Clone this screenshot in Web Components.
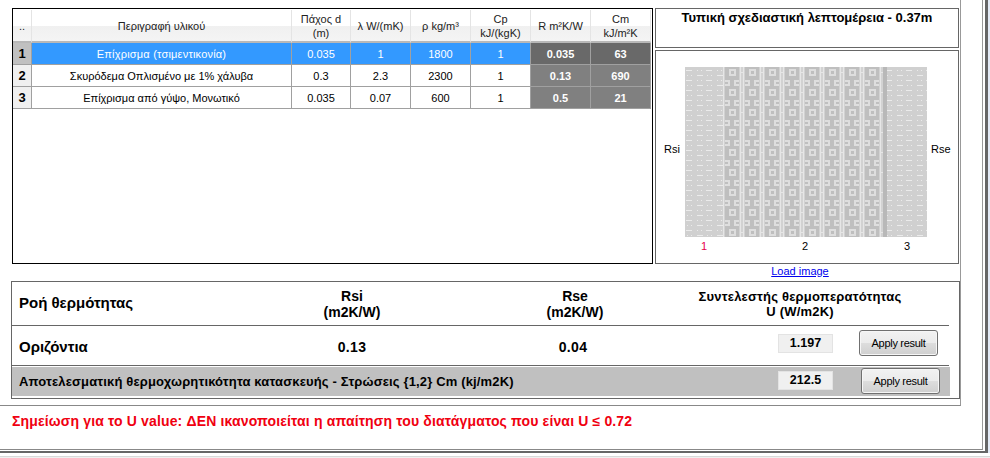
<!DOCTYPE html>
<html lang="el">
<head>
<meta charset="utf-8">
<title>U value</title>
<style>
html, body { margin: 0; padding: 0; background: #fff; }
body { font-family: "Liberation Sans", Arial, sans-serif; overflow: hidden; }
</style>
</head>
<body>
<thermal-page>
  <material-grid slot="grid"></material-grid>
  <detail-box slot="title" class="title">Τυπική σχεδιαστική λεπτομέρεια - 0.37m</detail-box>
  <section-drawing slot="drawing"></section-drawing>
  <result-panel slot="results"></result-panel>
  <span slot="note">Σημείωση για το U value: ΔΕΝ ικανοποιείται η απαίτηση του διατάγματος που είναι U ≤ 0.72</span>
</thermal-page>

<script>
// outer window frame, panel and note line
class ThermalPage extends HTMLElement {
    constructor() {
        super();
        this.attachShadow({ mode: 'open' });
        this.shadowRoot.innerHTML = `
            <style>
                :host { display: block; width: 990px; height: 458px; background: #e3eaf6; overflow: hidden; }
                .frame { width: 985px; height: 451px; background: #fff; padding-right: 0; border-right: 3px solid #666; border-bottom: 2px solid #666; box-sizing: content-box; }
                .win { height: 449px; width: 982px; background: #fff; border-right: 1px solid #999; border-bottom: 1px solid #888; }
                .panel { width: 960px; height: 405px; border-right: 1px solid #999; border-bottom: 1px solid #888; }
                .top { display: flex; height: 281px; padding: 8px 0 0 12px; gap: 2px; box-sizing: border-box; }
                .side { width: 305px; display: flex; flex-direction: column; gap: 2px; }
                .results { padding: 0 0 0 11px; }
                .note { padding: 7px 0 0 12px; color: #f00010; font-weight: bold; font-size: 14px; letter-spacing: .15px; line-height: 16px; }
                .foot { height: 3px; background: #fff; border-bottom: 1px solid #d8d8d8; }
                .foot2 { height: 2px; background: #f0f0f0; }
            </style>
            <div class="frame">
                <div class="win">
                    <div class="panel">
                        <div class="top">
                            <slot name="grid"></slot>
                            <div class="side">
                                <slot name="title"></slot>
                                <slot name="drawing"></slot>
                            </div>
                        </div>
                        <div class="results"><slot name="results"></slot></div>
                    </div>
                    <div class="note"><slot name="note"></slot></div>
                </div>
            </div>
            <div class="foot"></div>
            <div class="foot2"></div>
        `;
    }
}

// the material table, rows are fixed data
const COLUMNS = [
    ['..'], ['Περιγραφή υλικού'], ['Πάχος d', '(m)'], ['λ W/(mK)'], ['ρ kg/m³'],
    ['Cp', 'kJ/(kgK)'], ['R m²K/W'], ['Cm', 'kJ/m²K']
];
const ROWS = [
    ['1', 'Επίχρισμα (τσιμεντικονία)', '0.035', '1', '1800', '1', '0.035', '63'],
    ['2', 'Σκυρόδεμα Οπλισμένο με 1% χάλυβα', '0.3', '2.3', '2300', '1', '0.13', '690'],
    ['3', 'Επίχρισμα από γύψο, Μονωτικό', '0.035', '0.07', '600', '1', '0.5', '21']
];

class MaterialGrid extends HTMLElement {
    constructor() {
        super();
        this.attachShadow({ mode: 'open' });
        const head = COLUMNS.map((lines) => `<div class="hd">${lines.map((l) => `<span>${l}</span>`).join('')}</div>`).join('');
        const body = ROWS.map((row, r) => row.map((text, c) => {
            let cls = 'cell';
            if (c === 0) cls += ' rh';
            if (c === 1 && r === 0) cls += ' wide';
            if (c >= 6) cls += ' calc';
            if (r === 0) cls += ' sel';
            return `<div class="${cls}">${text}</div>`;
        }).join('')).join('');
        this.shadowRoot.innerHTML = `
            <style>
                :host { display: block; flex: none; width: 641px; height: 256px; box-sizing: border-box; border: 1px solid #000; font-size: 11px; color: #000; background: #fff; }
                .g { display: grid; grid-template-columns: 19px 260px 59px 60px 60px 60px 60px 60px; grid-template-rows: 33px repeat(3, 22px); margin-top: 1px; }
                .hd { display: flex; flex-direction: column; align-items: center; justify-content: center; line-height: 14px; box-sizing: border-box;
                    background: linear-gradient(#ffffff 0, #ffffff 50%, #f0f0f0 51%, #f4f4f4 100%);
                    border-right: 1px solid #e4e4e4; border-bottom: 2px solid #b8b8b8; color: #222; }
                .cell { display: flex; align-items: center; justify-content: center; box-sizing: border-box; border-right: 1px solid #a0a0a0; border-bottom: 1px solid #a0a0a0; }
                .wide { letter-spacing: .2px; }
                .rh { background: #f0f0f0; font-weight: bold; font-size: 13px; }
                .sel { background: #3399ff; color: #fff; }
                .rh.sel { background: #c0c0c0; color: #000; }
                .calc { background: #808080; color: #fff; font-weight: bold; }
                .calc.sel { background: #696969; }
            </style>
            <div class="g">${head}${body}</div>
        `;
    }
}

// simple outlined box, slot content is the title
class DetailBox extends HTMLElement {
    constructor() {
        super();
        this.attachShadow({ mode: 'open' });
        this.shadowRoot.innerHTML = `
            <style>
                :host { display: block; flex: none; box-sizing: border-box; width: 304px; height: 40px; border: 1px solid #666; text-align: center; font-weight: bold; font-size: 13px; padding-top: 2px; line-height: 14px; color: #000; }
            </style>
            <slot></slot>
        `;
    }
}

// cross section of the wall, plaster - concrete - plaster
class SectionDrawing extends HTMLElement {
    constructor() {
        super();
        this.attachShadow({ mode: 'open' });
        this.shadowRoot.innerHTML = `
            <style>
                :host { display: block; flex: none; width: 304px; font-size: 11px; color: #000; }
                .box { box-sizing: border-box; height: 214px; border: 1px solid #666; padding-top: 16px; }
                .mid { display: grid; grid-template-columns: 29px 242px 31px; align-items: center; }
                .side { padding-bottom: 6px; }
                .side.l { padding-left: 8px; }
                .side.r { padding-left: 4px; }
                svg { display: block; }
                .nums { display: grid; grid-template-columns: 38px 164px 40px; margin: 3px 0 0 29px; text-align: center; line-height: 12px; }
                .one { color: #e6004c; }
                a { display: block; text-align: center; color: #0000ee; line-height: 12px; margin-top: 1px; padding-right: 14px; }
            </style>
            <div class="box">
                <div class="mid">
                    <span class="side l">Rsi</span>
                    <svg width="242" height="170" viewBox="0 0 242 170">
                        <defs>
                            <pattern id="plaster" width="20" height="10" patternUnits="userSpaceOnUse">
                                <rect width="20" height="10" fill="#d0d0d0"/>
                                <g fill="#ebebeb">
                                    <rect x="1" y="3" width="6" height="1"/><rect x="12" y="3" width="1" height="1"/><rect x="16" y="3" width="1" height="1"/>
                                    <rect x="2" y="8" width="1" height="1"/><rect x="6" y="8" width="1" height="1"/><rect x="12" y="8" width="6" height="1"/>
                                </g>
                            </pattern>
                            <pattern id="concrete" width="20" height="20" patternUnits="userSpaceOnUse">
                                <rect width="20" height="20" fill="#bfbfbf"/>
                                <g fill="none" stroke="#dedede" stroke-width="2">
                                    <rect x="5" y="3" width="5" height="5"/>
                                    <path d="M0 14H4V18H0"/>
                                    <path d="M14 14H10V18H14"/>
                                </g>
                                <g fill="none" stroke="#e6e6e6" stroke-width="2">
                                    <path d="M15.5 0V20M18.5 0V20"/>
                                </g>
                                <path d="M15.5 5.5H18.5" stroke="#e6e6e6" stroke-width="1"/>
                            </pattern>
                        </defs>
                        <rect x="0" y="0" width="38" height="170" fill="url(#plaster)"/>
                        <rect x="38" y="0" width="160" height="170" fill="url(#concrete)"/>
                        <rect x="198" y="0" width="4" height="170" fill="#b8b8b8"/>
                        <rect x="202" y="0" width="40" height="170" fill="url(#plaster)"/>
                    </svg>
                    <span class="side r">Rse</span>
                </div>
                <div class="nums"><span class="one">1</span><span>2</span><span>3</span></div>
            </div>
            <a href="#">Load image</a>
        `;
    }
}

// read only value with the apply button next to it
class ResultValue extends HTMLElement {
    constructor() {
        super();
        this.attachShadow({ mode: 'open' });
        this.shadowRoot.innerHTML = `
            <style>
                :host { display: block; flex: none; width: 55px; height: 19px; box-sizing: border-box; border: 1px solid #e3e3e3; background: #f0f0f0; font-weight: bold; font-size: 12.5px; line-height: 17px; text-align: center; color: #000; }
            </style>
            <slot></slot>
        `;
    }
}

class ApplyButton extends HTMLElement {
    constructor() {
        super();
        this.attachShadow({ mode: 'open' });
        this.shadowRoot.innerHTML = `
            <style>
                :host { display: block; flex: none; width: 79px; height: 26px; box-sizing: border-box; border: 1px solid #707070; border-radius: 3px; background: linear-gradient(#f2f2f2 0, #ebebeb 50%, #dddddd 51%, #cfcfcf 100%); box-shadow: inset 0 0 0 1px #f6f6f6; font-size: 11px; font-weight: normal; letter-spacing: -.3px; line-height: 24px; text-align: center; color: #000; }
            </style>
            <slot></slot>
        `;
    }
}

class ResultPanel extends HTMLElement {
    constructor() {
        super();
        this.attachShadow({ mode: 'open' });
        this.shadowRoot.innerHTML = `
            <style>
                :host { display: block; width: 949px; height: 118px; box-sizing: border-box; border: 1px solid #666; font-weight: bold; color: #000; }
                .row { display: grid; align-items: center; width: 937px; box-sizing: border-box; border-bottom: 1px solid #666; grid-template-columns: 250px 180px 266px 184px 1fr; }
                .head { height: 44px; font-size: 14px; line-height: 16px; text-align: center; }
                .flow { height: 40px; font-size: 14px; letter-spacing: .3px; text-align: center; }
                .flow > span { padding-top: 2px; }
                .lab { text-align: left; padding-left: 7px; font-size: 15px; letter-spacing: 0; }
                .head .lab { padding-bottom: 1px; }
                .head .title { font-size: 13px; letter-spacing: .2px; line-height: 15px; white-space: nowrap; justify-self: center; }
                .v { display: flex; align-items: center; box-sizing: border-box; height: 100%; padding: 0 0 5px 70px; gap: 26px; width: 300px; letter-spacing: 0; }
                .bar { display: flex; align-items: center; margin-top: 1px; height: 29px; width: 938px; background: #c0c0c0; font-size: 13px; padding: 0 0 2px 7px; box-sizing: border-box; }
                .bar .l { width: 759px; flex: none; letter-spacing: .15px; padding-top: 2px; white-space: nowrap; }
                .bar .b { margin-left: 28px; }
            </style>
            <div class="row head">
                <span class="lab">Ροή θερμότητας</span>
                <span>Rsi<br>(m2K/W)</span>
                <span>Rse<br>(m2K/W)</span>
                <span class="title">Συντελεστής θερμοπερατότητας<br>U (W/m2K)</span>
                <span></span>
            </div>
            <div class="row flow">
                <span class="lab">Οριζόντια</span>
                <span>0.13</span>
                <span style="padding-right:4px">0.04</span>
                <div class="v"><result-value>1.197</result-value><apply-button>Apply result</apply-button></div>
            </div>
            <div class="bar">
                <span class="l">Αποτελεσματική θερμοχωρητικότητα κατασκευής - Στρώσεις {1,2} Cm (kj/m2K)</span>
                <result-value>212.5</result-value>
                <apply-button class="b">Apply result</apply-button>
            </div>
        `;
    }
}

customElements.define('thermal-page', ThermalPage);
customElements.define('material-grid', MaterialGrid);
customElements.define('detail-box', DetailBox);
customElements.define('section-drawing', SectionDrawing);
customElements.define('result-value', ResultValue);
customElements.define('apply-button', ApplyButton);
customElements.define('result-panel', ResultPanel);
</script>
</body>
</html>
